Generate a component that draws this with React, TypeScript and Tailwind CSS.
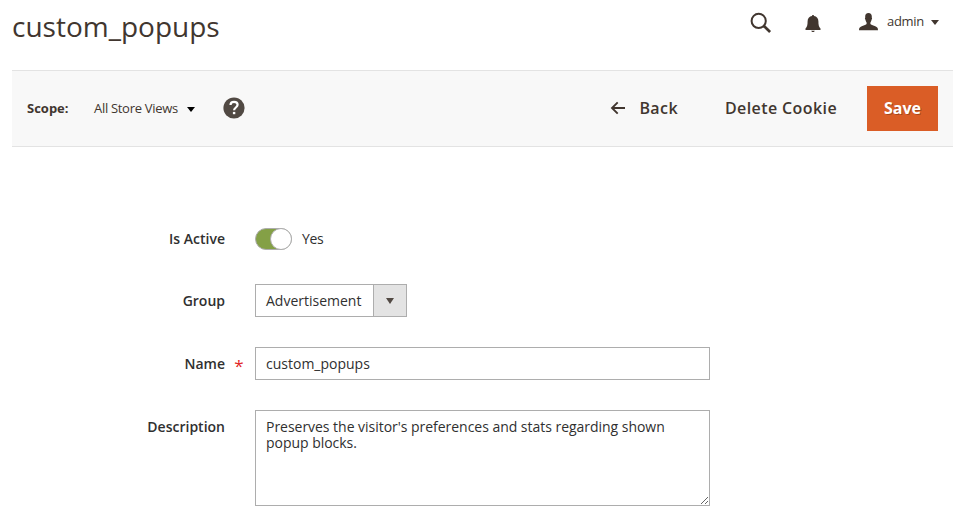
import React from 'react';

function Caret({ className }: { className: string }) {
  return (
    <svg className={className} viewBox="0 0 8 5" preserveAspectRatio="none" fill="currentColor">
      <path d="M0 0h8L4 5z" />
    </svg>
  );
}

function SearchIcon() {
  return (
    <svg className="h-[22px] w-[22px]" viewBox="0 0 22 22" fill="none" stroke="#41362f">
      <circle cx="8.7" cy="8.9" r="7.1" strokeWidth="2" />
      <path d="M13.700 13.800l6.400 6.200" strokeWidth="2.700" />
    </svg>
  );
}

function BellIcon() {
  return (
    <svg className="h-[18px] w-4" viewBox="0 0 16 18" fill="#41362f">
      <path d="M7 1C7 .4 7.400 0 8 0s1 .4 1 1c2.700.4 4.400 2.400 4.400 5.200 0 3.800.5 5.800 2.100 7.300v1.500H.5v-1.500c1.600-1.500 2.100-3.500 2.100-7.300C2.600 3.400 4.300 1.400 7 1z" />
      <path d="M6.200 15.700h3.600c-.3.900-.9 1.400-1.800 1.400s-1.500-.5-1.800-1.400z" />
    </svg>
  );
}

function UserIcon() {
  return (
    <svg className="h-[18px] w-[19px]" viewBox="0 0 19 18" fill="#41362f">
      <path d="M9.500 0C7.300 0 6.200 1.300 6.200 3.400v1.300c-.5.300-.3 1.700.3 2 .2 1.300.6 2.100 1.100 2.800v1.600c-.5.900-2.400 1.200-4.300 1.900C1 13.800 0 14.600 0 17.300h19c0-2.700-1-3.500-3.300-4.300-1.900-.7-3.800-1-4.300-1.900V9.500c.5-.7.900-1.500 1.100-2.800.6-.3.800-1.700.3-2V3.400C12.800 1.300 11.700 0 9.500 0z" />
    </svg>
  );
}

function HelpIcon() {
  return (
    <svg className="h-[22px] w-[22px]" viewBox="0 0 22 22">
      <circle cx="11" cy="11" r="10.600" fill="#514943" />
      <path d="M7.500 8.100c0-2 1.400-3.300 3.500-3.300s3.600 1.200 3.600 3c0 2.700-3.500 2.700-3.500 5.500" fill="none" stroke="#fff" strokeWidth="2.200" />
      <rect x="9.900" y="14.900" width="2.400" height="2.300" fill="#fff" />
    </svg>
  );
}

function BackArrow() {
  return (
    <svg className="h-[14px] w-[15px]" viewBox="0 0 15 14" fill="none" stroke="#41362f" strokeWidth="1.900">
      <path d="M15 7H2.500M7.700 1.300L2 7l5.700 5.700" />
    </svg>
  );
}

function Label({ children, required = false }: { children: React.ReactNode; required?: boolean }) {
  return (
    <div className="flex h-[33px] w-[255px] shrink-0 items-center justify-end text-[14px] font-semibold text-[#303030]">
      <span>{children}</span>
      <span className="flex w-[30px] justify-center pt-1 pr-0.5 text-[17px] leading-none font-normal text-[#e22626]">
        {required ? '*' : ''}
      </span>
    </div>
  );
}

export default function App() {
  return (
    <div className="h-[520px] w-[965px] overflow-hidden bg-white font-['Open_Sans',sans-serif] whitespace-nowrap text-[#41362f]">
      <header className="flex h-[70px] items-start justify-between pr-[26px] pl-3">
        <h1 className="pt-2 text-[28px] leading-[36px]">custom_popups</h1>
        <div className="flex items-start">
          <div className="pt-3"><SearchIcon /></div>
          <div className="ml-[33px] pt-[15px]"><BellIcon /></div>
          <div className="ml-[38px] pt-[13px]"><UserIcon /></div>
          <span className="ml-[9px] pt-3 text-[13px] leading-[18px] tracking-[-0.3px]">admin</span>
          <Caret className="mt-5 ml-[7px] h-[5px] w-2" />
        </div>
      </header>

      <div className="mx-3 flex h-[77px] items-center justify-between border-y border-[#e3e3e3] bg-[#f8f8f8] px-[15px] pb-px">
        <div className="flex items-center text-[13px]">
          <span className="w-[67px] pt-px font-bold">Scope:</span>
          <span className="w-[93px] pt-px tracking-[-0.3px]">All Store Views</span>
          <Caret className="mt-[3px] h-[5px] w-2 text-black" />
          <div className="ml-7"><HelpIcon /></div>
        </div>
        <div className="flex items-center text-[16px] font-semibold tracking-[0.4px]">
          <BackArrow />
          <span className="ml-[14px]">Back</span>
          <span className="ml-[47px]">Delete Cookie</span>
          <button className="mt-px ml-[30px] h-[45px] w-[71px] bg-[#da5d26] pb-0.5 font-bold tracking-normal text-white [text-shadow:1px_1px_0_rgba(0,0,0,0.25)]">
            Save
          </button>
        </div>
      </div>

      <form className="flex flex-col pt-[75px] text-[14px] text-[#303030]">
        <div className="flex h-[33px] items-center">
          <Label>Is Active</Label>
          <div className="flex h-[22px] w-[37px] justify-end rounded-full border border-[#adadad] bg-[#84a046]">
            <span className="-m-px h-[22px] w-[22px] rounded-full border border-[#adadad] bg-white" />
          </div>
          <span className="ml-[10px] tracking-[-0.3px]">Yes</span>
        </div>
        <div className="mt-[29px] flex h-[33px]">
          <Label>Group</Label>
          <div className="flex h-[33px] w-[152px] border border-[#adadad]">
            <span className="flex w-[117px] items-center pl-[10px]">Advertisement</span>
            <span className="flex flex-1 items-center justify-center border-l border-[#adadad] bg-[#e3e3e3]">
              <Caret className="mt-px h-[6px] w-2 text-[#514943]" />
            </span>
          </div>
        </div>
        <div className="mt-[30px] flex h-[33px]">
          <Label required>Name</Label>
          <div className="flex h-[33px] w-[455px] items-center border border-[#adadad] pl-[10px]">custom_popups</div>
        </div>
        <div className="mt-[30px] flex">
          <Label>Description</Label>
          <div className="flex h-[96px] w-[455px] items-end border border-[#adadad]">
            <p className="flex-1 self-start pt-2 pl-[10px] leading-4 tracking-[-0.03px]">
              Preserves the visitor's preferences and stats regarding shown
              <br />
              popup blocks.
            </p>
            <svg className="h-[9px] w-[9px]" viewBox="0 0 9 9" fill="none" stroke="#555" strokeWidth="0.9">
              <path d="M1 8L8 1M5 8l3-3" />
            </svg>
          </div>
        </div>
      </form>
    </div>
  );
}
